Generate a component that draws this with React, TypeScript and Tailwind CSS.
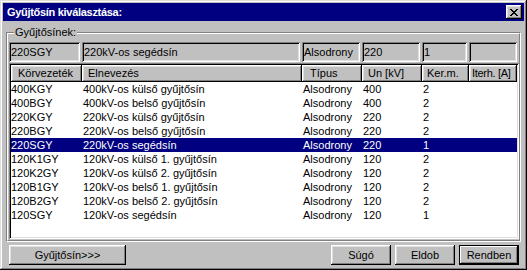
const FONT = "font-['Liberation_Sans',Arial,sans-serif]"

const rows = [
  { kod: '400KGY', nev: '400kV-os külső gyűjtősín', tipus: 'Alsodrony', un: '400', ker: '2' },
  { kod: '400BGY', nev: '400kV-os belső gyűjtősín', tipus: 'Alsodrony', un: '400', ker: '2' },
  { kod: '220KGY', nev: '220kV-os külső gyűjtősín', tipus: 'Alsodrony', un: '220', ker: '2' },
  { kod: '220BGY', nev: '220kV-os belső gyűjtősín', tipus: 'Alsodrony', un: '220', ker: '2' },
  { kod: '220SGY', nev: '220kV-os segédsín', tipus: 'Alsodrony', un: '220', ker: '1' },
  { kod: '120K1GY', nev: '120kV-os külső 1. gyűjtősín', tipus: 'Alsodrony', un: '120', ker: '2' },
  { kod: '120K2GY', nev: '120kV-os külső 2. gyűjtősín', tipus: 'Alsodrony', un: '120', ker: '2' },
  { kod: '120B1GY', nev: '120kV-os belső 1. gyűjtősín', tipus: 'Alsodrony', un: '120', ker: '2' },
  { kod: '120B2GY', nev: '120kV-os belső 2. gyűjtősín', tipus: 'Alsodrony', un: '120', ker: '2' },
  { kod: '120SGY', nev: '120kV-os segédsín', tipus: 'Alsodrony', un: '120', ker: '1' },
]

const RAISED = 'shadow-[inset_-1px_-1px_#000,inset_1px_1px_#fff,inset_-2px_-2px_#808080,inset_2px_2px_#dfdfdf]'
const SUNKEN = 'shadow-[inset_1px_1px_#808080,inset_-1px_-1px_#fff,inset_2px_2px_#000,inset_-2px_-2px_#dfdfdf]'

const headers = [
  ['w-[71px]', 'Körvezeték', 'pl-[7px]'],
  ['w-[220px]', 'Elnevezés', 'pl-[6px]'],
  ['w-[60px]', 'Típus', 'pl-[8px]'],
  ['w-[60px]', 'Un [kV]', 'pl-[6px]'],
  ['w-[47px]', 'Ker.m.', 'pl-[5px]'],
  ['w-[48px]', 'Iterh. [A]', 'pl-[3px] tracking-[-0.3px]'],
]

function Field({ w, text }: { w: string; text: string }) {
  return (
    <div className={`${w} h-[20px] ${SUNKEN} bg-[#c0c0c0] flex items-center pl-[2px] text-[11px] text-black`}>
      {text}
    </div>
  )
}

function Btn({ w, label, def }: { w: string; label: string; def?: boolean }) {
  return (
    <button
      className={`${w} h-[20px] bg-[#c0c0c0] text-[11px] text-black flex items-center justify-center ${
        def ? 'border border-black shadow-[inset_-1px_-1px_#000,inset_1px_1px_#fff,inset_-2px_-2px_#808080]' : RAISED
      }`}
    >
      {label}
    </button>
  )
}

export default function App() {
  return (
    <div
      className={`${FONT} w-[527px] h-[270px] bg-[#c0c0c0] p-[3px] flex flex-col shadow-[inset_-1px_-1px_#000,inset_1px_1px_#dfdfdf,inset_-2px_-2px_#808080,inset_2px_2px_#fff]`}
    >
      {/* Title bar */}
      <div className="h-[18px] bg-[#000080] flex items-center justify-between pl-[4px] pr-[2px]">
        <span className="text-white font-bold text-[11px] tracking-[-0.3px] leading-none">Gyűjtősín kiválasztása:</span>
        <div className={`w-[16px] h-[14px] bg-[#c0c0c0] ${RAISED} flex items-center justify-center`}>
          <svg width="8" height="7" viewBox="0 0 8 7" shapeRendering="crispEdges">
            <path d="M0 0h2v1H0zM6 0h2v1H6zM1 1h2v1H1zM5 1h2v1H5zM2 2h4v1H2zM3 3h2v1H3zM2 4h4v1H2zM1 5h2v1H1zM5 5h2v1H5zM0 6h2v1H0zM6 6h2v1H6z" fill="#000" />
          </svg>
        </div>
      </div>

      {/* Group box */}
      <div className="relative mt-[11px] mx-[3px] h-[210px] border border-t-[#808080] border-l-[#808080] border-r-white border-b-white">
        <div className="h-full border border-t-white border-l-white border-r-[#808080] border-b-[#808080] px-[1px] pt-[8px] flex flex-col">
          <span className="absolute -top-[7px] left-[7px] bg-[#c0c0c0] px-[1px] text-[11px] leading-[13px] text-black">
            Gyűjtősínek:
          </span>

          {/* Current selection fields */}
          <div className="flex gap-[2px]">
            <Field w="w-[71px]" text="220SGY" />
            <Field w="w-[218px]" text="220kV-os segédsín" />
            <Field w="w-[58px]" text="Alsodrony" />
            <Field w="w-[58px]" text="220" />
            <Field w="w-[45px]" text="1" />
            <Field w="w-[48px]" text="" />
          </div>

          {/* List */}
          <div className={`mt-[1px] w-[510px] h-[176px] bg-white ${SUNKEN} p-[2px] flex flex-col text-[11px] text-black`}>
            <div className="flex h-[17px] bg-[#c0c0c0]">
              {headers.map(([w, t, pad]) => (
                <div key={t} className={`${w} ${pad} h-full ${RAISED} flex items-center whitespace-nowrap overflow-hidden`}>
                  {t}
                </div>
              ))}
            </div>
            {rows.map((r, i) => (
              <div
                key={r.kod}
                className={`flex h-[14px] items-center leading-none whitespace-nowrap ${
                  i === 4 ? 'bg-[#000080] text-white' : ''
                }`}
              >
                <div className="w-[71px]">{r.kod}</div>
                <div className="w-[220px] pl-[1px]">{r.nev}</div>
                <div className="w-[60px] pl-[1px]">{r.tipus}</div>
                <div className="w-[60px] pl-[1px]">{r.un}</div>
                <div className="w-[47px] pl-[1px]">{r.ker}</div>
                <div className="flex-1" />
              </div>
            ))}
          </div>
        </div>
      </div>

      {/* Buttons */}
      <div className="mt-[3px] flex items-center">
        <div className="ml-[6px]">
          <Btn w="w-[117px]" label="Gyűjtősín>>>" />
        </div>
        <div className="ml-auto mr-[5px] flex gap-[4px]">
          <Btn w="w-[60px]" label="Súgó" />
          <Btn w="w-[60px]" label="Eldob" />
          <Btn w="w-[60px]" label="Rendben" def />
        </div>
      </div>
    </div>
  )
}
